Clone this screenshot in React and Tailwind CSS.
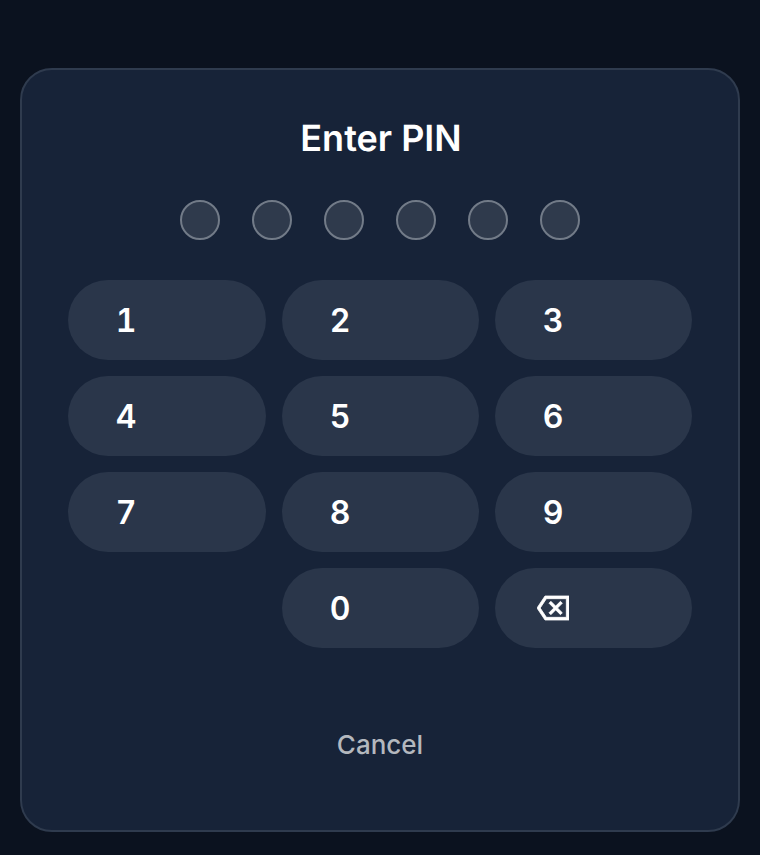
import React from "react";

function Key({ children, digit }) {
  return (
    <button className="flex h-20 items-center justify-start rounded-[40px] bg-[#2a364a] pl-12 text-[32px] font-semibold text-white tabular-nums">
      <span className={digit ? "flex w-5 justify-center pt-0.5" : "flex w-5 justify-center"}>{children}</span>
    </button>
  );
}

function BackspaceIcon() {
  return (
    <svg className="shrink-0" width="32" height="32" viewBox="0 0 24 24" fill="white" stroke="white" strokeWidth="0.6">
      <path d="M24 3H6l-6 9 6 9h18V3zm-2 16H7.07L2.4 12l4.66-7H22v14zm-11.59-2L14 13.41 17.59 17 19 15.59 15.41 12 19 8.41 17.59 7 14 10.59 10.41 7 9 8.41 12.59 12 9 15.59z" />
    </svg>
  );
}

export default function App() {
  return (
    <div className="flex h-[855px] w-[760px] items-start justify-center bg-[#0b121f] pt-[68px] font-['Inter',sans-serif] [text-rendering:geometricPrecision]">
      <div className="flex h-[764px] w-[720px] flex-col items-center rounded-[32px] border-2 border-[#2f3b4e] bg-[#172338] px-[46px] pt-[46px]">
        <h1 className="pl-0.5 text-[36px] leading-[44px] font-semibold text-white">Enter PIN</h1>
        <div className="mt-[40px] flex gap-8">
          {[0, 1, 2, 3, 4, 5].map((i) => (
            <div key={i} className="h-10 w-10 rounded-full border-2 border-[#727b88] bg-[#2f3a4c]" />
          ))}
        </div>
        <div className="mt-10 grid w-full grid-cols-[198px_197px_197px] gap-4">
          {["1", "2", "3", "4", "5", "6", "7", "8", "9"].map((n) => (
            <Key key={n} digit>{n}</Key>
          ))}
          <div />
          <Key digit>0</Key>
          <Key>
            <BackspaceIcon />
          </Key>
        </div>
        <button className="mt-[77px] text-[26px] leading-[40px] font-medium text-[#b4b8be]">Cancel</button>
      </div>
    </div>
  );
}
